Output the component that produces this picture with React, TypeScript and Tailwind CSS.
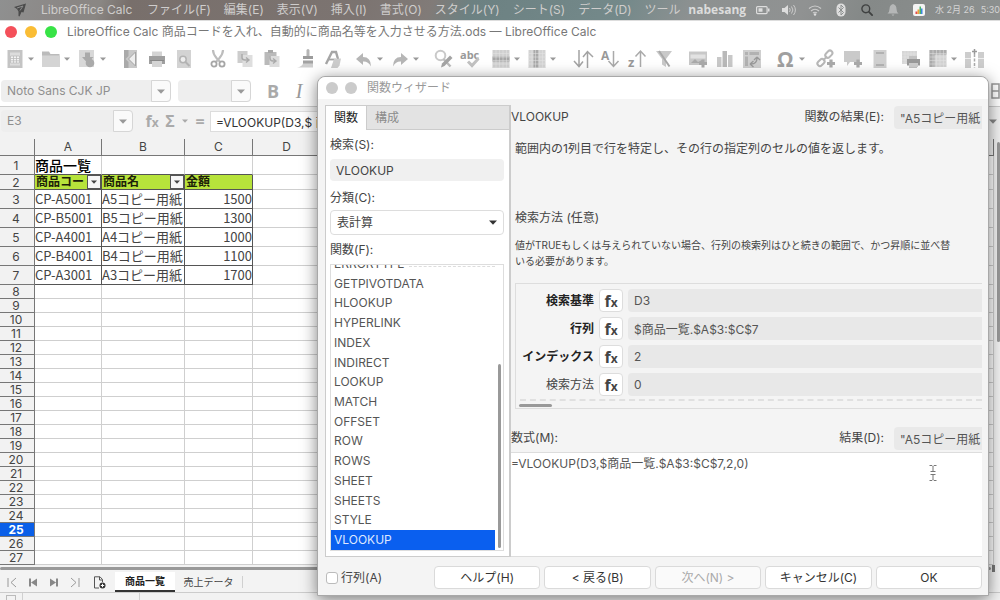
import React from "react";

const uiFont = "font-['Inter','Noto_Sans_CJK_JP',sans-serif]";
const cellFont = "font-['Noto_Sans_CJK_JP',sans-serif]";

function Caret({ className = "" }: { className?: string }) {
  return (
    <svg viewBox="0 0 8 5" className={className || "h-[5px] w-2 fill-[#999]"} aria-hidden="true">
      <path d="M0 .5h8L4 4.700z" />
    </svg>
  );
}

type Tool = { label: string; art: React.ReactNode; menu?: boolean };

const grid = (x: number, y: number, w: number, h: number, s = 3) => {
  let d = "";
  for (let i = x + s; i < x + w; i += s) d += `M${i} ${y}v${h}`;
  for (let j = y + s; j < y + h; j += s) d += `M${x} ${j}h${w}`;
  return <path d={d} stroke="#e4e4e4" strokeWidth=".5" fill="none" />;
};

const groups: { space: string; tools: Tool[] }[] = [
  {
    space: "",
    tools: [
      {
        label: "新規",
        menu: true,
        art: (
          <>
            <path d="M1.500 0H16.500V18H1.500z" fill="#c4c4c4" />
            <path d="M4 2.500h10v13H4z" fill="#dcdcdc" />
            <path d="M4.500 6h9v7h-9z" fill="#f4f4f4" stroke="#bbb" strokeWidth=".8" />
            <path d="M4.500 8.500h9M4.500 10.800h9M7.500 6v7M10.500 6v7" stroke="#bbb" strokeWidth=".8" />
          </>
        ),
      },
      {
        label: "開く",
        menu: true,
        art: (
          <>
            <path d="M0 1.500h7l1.500 2.500H17.500V6H0z" fill="#bbb" />
            <path d="M0 5.500h18V17H0z" fill="#d4d4d4" />
          </>
        ),
      },
      {
        label: "保存",
        menu: true,
        art: (
          <>
            <path d="M1 0h15v17H1z" fill="#d8d8d8" />
            <path d="M7 2.500h5V7h3.500L9.500 13 4 7h3z" fill="#aaa" />
            <circle cx="12" cy="13" r="4.300" fill="#aaa" />
          </>
        ),
      },
    ],
  },
  {
    space: "ml-[7px]",
    tools: [
      {
        label: "PDF",
        art: (
          <>
            <path d="M3 0h13v18H3z" fill="#c8c8c8" />
            <path d="M3 0h4.500v6L4.500 9l3 3v6H3z" fill="#aaa" />
            <path d="M14.500 2 7.500 9l7 7z" fill="#eee" stroke="#a4a4a4" />
          </>
        ),
      },
      {
        label: "印刷",
        art: (
          <>
            <path d="M4 1.500h10V7H4z" fill="#d4d4d4" />
            <path d="M1 6h16v8H1z" fill="#9f9f9f" />
            <path d="M4 11h10v6H4z" fill="#d4d4d4" />
            <path d="M2 10.500h14" stroke="#888" />
          </>
        ),
      },
      {
        label: "印刷プレビュー",
        art: (
          <>
            <path d="M2 0h14v18H2z" fill="#d3d3d3" />
            <circle cx="8" cy="9.500" r="3.200" fill="#eee" stroke="#b3b3b3" strokeWidth="1.500" />
            <path d="m10.500 12 4 4" stroke="#b3b3b3" strokeWidth="2" />
          </>
        ),
      },
    ],
  },
  {
    space: "ml-[7px]",
    tools: [
      {
        label: "切り取り",
        art: (
          <>
            <path d="M4 0c0 3 1 5 3.500 8l4.500 5M14 0c0 3-1 5-3.500 8L6 13" stroke="#bdbdbd" strokeWidth="2.200" fill="none" />
            <circle cx="5" cy="14" r="2.600" fill="#fff" stroke="#a6a6a6" strokeWidth="1.800" />
            <circle cx="13" cy="14" r="2.600" fill="#fff" stroke="#a6a6a6" strokeWidth="1.800" />
          </>
        ),
      },
      {
        label: "コピー",
        art: (
          <>
            <path d="M1.500 1h10v12h-10z" fill="#cdcdcd" />
            <path d="M6.500 5h10v12h-10z" fill="#dedede" />
            <path d="M6 4v3.500q0 2.500 3 2.500h3M10 7.500l3 2.500-3 2.500" stroke="#aaa" strokeWidth="1.400" fill="none" />
          </>
        ),
      },
      {
        label: "貼り付け",
        art: (
          <>
            <path d="M1.500 2h12v13h-12z" fill="#bababa" />
            <path d="M5 0h5v3H5z" fill="#a9a9a9" />
            <path d="M6.500 6h10v11h-10z" fill="#dcdcdc" />
            <path d="M7 6v2q0 3 3 3h2M10 8.500l3 2.500-3 2.500" stroke="#aaa" strokeWidth="1.400" fill="none" />
          </>
        ),
      },
    ],
  },
  {
    space: "ml-[7px]",
    tools: [
      {
        label: "書式のコピー",
        art: (
          <>
            <rect x="9.500" y="-1" width="3" height="9" rx="1.500" fill="#b5b5b5" />
            <path d="M6 6h10v3H6z" fill="#9c9c9c" />
            <path d="M6 10h10v7.500H0q5-1 6-4z" fill="#cfcfcf" />
            <path d="M6 11h10v2.500H6z" fill="#a2a2a2" />
          </>
        ),
      },
      {
        label: "書式のクリア",
        art: (
          <>
            <path d="M2 14 8 2h4l2 7" stroke="#a6a6a6" strokeWidth="2.400" fill="none" />
            <path d="M5 9.500h7" stroke="#a6a6a6" strokeWidth="1.800" />
            <path d="m10 9 7-.5-1.500 7-2 2.500H7z" fill="#ccc" />
          </>
        ),
      },
    ],
  },
  {
    space: "ml-1",
    tools: [
      {
        label: "元に戻す",
        menu: true,
        art: <path d="M1 9l7-6v4q8 0 8 9.500Q13 11 8 11.500V15z" fill="#b6b6b6" />,
      },
      {
        label: "やり直し",
        menu: true,
        art: <path d="M17 9l-7-6v4Q2 7 2 16.500 5 11 10 11.500V15z" fill="#b6b6b6" />,
      },
    ],
  },
  {
    space: "ml-[7px]",
    tools: [
      {
        label: "検索と置換",
        art: (
          <>
            <circle cx="6.500" cy="5.500" r="4.800" fill="#fff" stroke="#c9c9c9" strokeWidth="2" />
            <path d="m9.500 9 7 7.500" stroke="#bcbcbc" strokeWidth="2.500" />
            <path d="m7 17.500 1-4 8-8 2.500 2.500-8 8z" fill="#a4a4a4" />
          </>
        ),
      },
      {
        label: "スペルチェック",
        art: (
          <>
            <text x="-1" y="9" fontSize="11" fontWeight="700" fill="#999" className="font-['Open_Sans',sans-serif]">
              abc
            </text>
            <path d="m7 11.500 4 4 6.500-7" stroke="#c2c2c2" strokeWidth="3" fill="none" />
          </>
        ),
      },
    ],
  },
  {
    space: "ml-1",
    tools: [
      {
        label: "行",
        menu: true,
        art: (
          <>
            <path d="M.5 0h17v18H.5z" fill="#cfcfcf" />
            <path d="M.5 6.500h17v5H.5z" fill="#a6a6a6" />
            {grid(0.5, 0, 17, 18, 3.5)}
          </>
        ),
      },
      {
        label: "列",
        menu: true,
        art: (
          <>
            <path d="M.5 0h17v18H.5z" fill="#d3d3d3" />
            <path d="M5.500 0h5v18h-5z" fill="#aaa" />
            {grid(0.5, 0, 17, 18, 3.5)}
          </>
        ),
      },
    ],
  },
  {
    space: "ml-[10px]",
    tools: [
      {
        label: "並べ替え",
        art: (
          <path
            d="M5 0v16M0 11l5 5.500L9 11.500M13.500 18V2M9 7l4.500-5.500L19 7"
            stroke="#a3a3a3"
            strokeWidth="1.500"
            fill="none"
          />
        ),
      },
      {
        label: "昇順",
        art: (
          <>
            <text x="0" y="10" fontSize="12" fontWeight="700" fill="#999" className="font-['Open_Sans',sans-serif]">
              A
            </text>
            <path d="M12.500 1v15.500M7.500 11l5 5.500 5-5.500" stroke="#aaa" strokeWidth="1.500" fill="none" />
          </>
        ),
      },
      {
        label: "降順",
        art: (
          <>
            <text x="0" y="17" fontSize="13" fontWeight="700" fill="#999" className="font-['Open_Sans',sans-serif]">
              z
            </text>
            <path d="M12.500 17V1M7.500 6.500l5-5.500 5 5.500" stroke="#aaa" strokeWidth="1.500" fill="none" />
          </>
        ),
      },
      {
        label: "オートフィルター",
        art: (
          <>
            <path d="M1 1h16l-6 8v8l-4-2.500V9z" fill="#c9c9c9" />
            <path d="M4 1 14.500 16.500" stroke="#a8a8a8" strokeWidth="2" />
          </>
        ),
      },
    ],
  },
  {
    space: "ml-[7px]",
    tools: [
      {
        label: "画像",
        art: (
          <>
            <path d="M0 1.500h18V15H0z" fill="#c8c8c8" />
            <path d="M1.500 4.500h15v4h-15z" fill="#e2e2e2" />
            <path d="m2 13 4-4 3 3 4-2 3 3z" fill="#aaa" />
            <path d="M14 9.500v8M10 13.500h8" stroke="#aaa" strokeWidth="3" />
          </>
        ),
      },
      {
        label: "グラフ",
        art: (
          <>
            <path d="M1 7h4.500v10H1z" fill="#c8c8c8" />
            <path d="M6.500 1H11v16H6.500z" fill="#b9b9b9" />
            <path d="M12 5h4.500v12H12z" fill="#c8c8c8" />
          </>
        ),
      },
      {
        label: "ピボットテーブル",
        art: (
          <>
            <path d="M0 0h18v18H0z" fill="#cfcfcf" />
            <path d="M2 2h3v3H2zM6.500 2H16v3H6.500zM2 6.500h3V16H2z" fill="#b2b2b2" />
            <path d="M8 14q6 0 6-6M7 14l3.500-3M7 14l3.500 3M14 7l-3 3M14 7l3 3" stroke="#999" strokeWidth="1.300" fill="none" />
          </>
        ),
      },
    ],
  },
  {
    space: "ml-[7px]",
    tools: [
      {
        label: "特殊文字",
        menu: true,
        art: (
          <text x="0" y="16.500" fontSize="21" fontWeight="700" fill="#a0a0a0" className="font-['Open_Sans',sans-serif]">
            Ω
          </text>
        ),
      },
    ],
  },
  {
    space: "ml-1",
    tools: [
      {
        label: "ハイパーリンク",
        art: (
          <>
            <g fill="none" stroke="#b8b8b8" strokeWidth="2">
              <rect x="-3.500" y="-2.500" width="8" height="5" rx="2.500" transform="translate(11.500 4.500) rotate(-45)" />
              <rect x="-4" y="-2.500" width="8" height="5" rx="2.500" transform="translate(4 12.500) rotate(-45)" />
              <path d="m6 10.500 4-4" />
            </g>
            <path d="M14 9.500v8M10 13.500h8" stroke="#aaa" strokeWidth="3.200" />
          </>
        ),
      },
      {
        label: "コメント",
        art: (
          <>
            <path d="M0 1h16v11H6l-3 4v-4H0z" fill="#cacaca" />
            <path d="M14 9.500v8M10 13.500h8" stroke="#aaa" strokeWidth="3.200" />
          </>
        ),
      },
      {
        label: "ヘッダーとフッター",
        art: (
          <>
            <path d="M2.500 0h13v18h-13z" fill="#d0d0d0" />
            <path d="M5 3h8M5 15h8" stroke="#a8a8a8" strokeWidth="1.500" />
          </>
        ),
      },
    ],
  },
  {
    space: "ml-1",
    tools: [
      {
        label: "印刷範囲",
        art: (
          <>
            <path d="M0 1h15v13H0z" fill="#d6d6d6" />
            {grid(0, 1, 15, 13)}
            <path d="M7 6h8v4H7zM7 14h8v4H7z" fill="#c2c2c2" />
            <path d="M5 9h13v6.500H5z" fill="#999" />
            <path d="M7 13h9v4H7z" fill="#ccc" />
          </>
        ),
      },
      {
        label: "固定",
        menu: true,
        art: (
          <>
            <path d="M.5 0h17v17H.5z" fill="#d3d3d3" />
            <path d="M.5 0h17v4.500h-12V17h-5z" fill="#acacac" />
            {grid(0.5, 0, 17, 17, 3.5)}
          </>
        ),
      },
      {
        label: "分割",
        art: (
          <>
            <path d="M0 2h6v16H0zM13 2h6v16h-6z" fill="#cdcdcd" />
            <path d="M0 8.500h6M13 8.500h6" stroke="#eee" />
            <path d="M9.500 4v14" stroke="#aaa" strokeWidth="1.500" strokeDasharray="3 1.500" />
            <path d="M9.500-1v5M7 1.500h5" stroke="#999" strokeWidth="1.500" />
          </>
        ),
      },
    ],
  },
];

const menus = ["ファイル(F)", "編集(E)", "表示(V)", "挿入(I)", "書式(O)", "スタイル(Y)", "シート(S)", "データ(D)", "ツール"];

function MenuBar() {
  return (
    <header className="flex h-5 shrink-0 items-center overflow-hidden whitespace-nowrap bg-[linear-gradient(112deg,#8f9090_0%,#8b8785_7%,#8a8784_10%,#786f6b_13%,#7c7471_36%,#817b78_43%,#6c8182_47%,#74898a_62%,#8d9191_69%,#909292_80%,#858988_86%,#8c908f_100%)] text-xs text-[#cfcdcc]">
      <svg viewBox="0 0 14 14" className="ml-[13px] h-3.5 w-3.5 shrink-0" aria-hidden="true">
        <path d="M1 4 13 .5 10.500 9.500 8.500 9 6.500 13.500 5.500 13 5.500 8.500 4 6z" fill="#4b4b4b" />
        <path d="M4 5 10 3 7 7.500" fill="none" stroke="#8d8d8d" />
      </svg>
      <nav className="ml-3.5 flex gap-[13px]">
        <button className="w-[93px] text-left">LibreOffice Calc</button>
        {menus.map((m) => (
          <button key={m}>{m}</button>
        ))}
      </nav>
      <div className="ml-auto flex shrink-0 items-center">
        <span className="font-['Open_Sans',sans-serif] text-xs font-bold text-[#dcdcdc]">nabesang</span>
        <svg viewBox="0 0 14 10" className="ml-2.5 h-2.5 w-3.5" aria-label="バッテリー">
          <rect x=".6" y="1.600" width="10.500" height="7" rx="1" fill="none" stroke="#ddd" strokeWidth="1.200" />
          <path d="M2.500 3.300h4v3.500h-4zM12 3.500h1.500v3H12z" fill="#ddd" />
        </svg>
        <svg viewBox="0 0 14 12" className="ml-3 h-3 w-3.5" aria-label="音量">
          <path d="M0 4h2.500L6 1v10L2.500 8H0z" fill="#ddd" />
          <path d="M7.500 4q1.500 2 0 4M9.500 2.500q2.800 3.500 0 7M11.500 1q3.800 5 0 10" fill="none" stroke="#ccc" />
        </svg>
        <svg viewBox="0 0 14 12" className="ml-3 h-3 w-3.5" aria-label="Wi-Fi">
          <path d="M1 4.500q6-5 12 0M3 7q4-3.500 8 0M5 9q2-1.500 4 0" fill="none" stroke="#ccc" strokeWidth="1.200" />
          <circle cx="7" cy="10.500" r="1.200" fill="#ddd" />
        </svg>
        <svg viewBox="0 0 10 14" className="ml-3.5 h-3.5 w-2.5" aria-label="Bluetooth">
          <rect x=".5" y=".5" width="9" height="13" rx="4.500" fill="#dedede" />
          <path d="m2.500 4.500 5 5L5 12V2l2.500 2.500-5 5" fill="none" stroke="#8c908f" />
        </svg>
        <svg viewBox="0 0 12 12" className="ml-[15px] h-3 w-3" aria-label="検索">
          <circle cx="4.800" cy="4.800" r="3.900" fill="none" stroke="#3f4141" strokeWidth="1.400" />
          <path d="m7.700 7.700 4 4" stroke="#3f4141" strokeWidth="1.800" />
        </svg>
        <svg viewBox="0 0 12 12" className="ml-3.5 h-3 w-3" aria-label="通知">
          <path d="M6 0q3.500 1 3.500 5 0 3 2 4.500H.5q2-1.500 2-4.500Q2.500 1 6 0M4.500 10.500h3L6 12z" fill="#b5b7b7" />
        </svg>
        <svg viewBox="0 0 12 12" className="ml-3.5 h-3 w-3" aria-label="グラフ">
          <rect width="12" height="12" rx="2" fill="#f4f4f4" />
          <path d="M2.500 7.500h2V10h-2z" fill="#e34b4b" />
          <path d="M4.500 5.500h2V10h-2z" fill="#f0a13c" />
          <path d="M6.500 2.500H8V10H6.500z" fill="#46b26b" />
          <path d="M8 4.500h1.500V10H8z" fill="#3d86e0" />
        </svg>
        <span className="ml-2.5 text-[9px] text-[#d4d4d4]">水 2月 26</span>
        <span className="ml-1.5 text-[9px] text-[#d4d4d4]">5:30</span>
      </div>
    </header>
  );
}

function Toolbar() {
  return (
    <div className="flex h-[34px] shrink-0 items-center overflow-hidden pl-px" role="toolbar" aria-label="標準">
      {groups.map((g, i) => (
        <div key={i} className={`flex shrink-0 items-center ${g.space}`}>
          {g.tools.map((t) => (
            <div key={t.label} className="flex items-center">
              <button aria-label={t.label} className="flex w-[27px] justify-center">
                <svg viewBox="0 0 18 18" className="h-[18px] w-[18px] overflow-visible">
                  {t.art}
                </svg>
              </button>
              {t.menu && (
                <button aria-label={`${t.label}のメニュー`} className="w-[9px]">
                  <Caret className="h-1 w-1.5 fill-[#999]" />
                </button>
              )}
            </div>
          ))}
        </div>
      ))}
    </div>
  );
}

function Combo({ label, value, width }: { label: string; value: string; width: string }) {
  return (
    <div className={`flex h-[22px] items-stretch rounded bg-[#eee] ${width}`}>
      <input aria-label={label} defaultValue={value} className="min-w-0 flex-1 bg-transparent pl-1.5 text-xs text-[#8f8f8f] outline-none" />
      <button aria-label={`${label}の一覧`} className="flex w-5 items-center justify-center rounded-r border border-[#d6d6d6] bg-[#fafafa]">
        <Caret />
      </button>
    </div>
  );
}

const rows: { h: string; cells: string[] }[] = [
  { h: "h-[19px]", cells: ["商品一覧", "", ""] },
  { h: "h-[15px]", cells: ["商品コー", "商品名", "金額"] },
  { h: "h-[19px]", cells: ["CP-A5001", "A5コピー用紙", "1500"] },
  { h: "h-[19px]", cells: ["CP-B5001", "B5コピー用紙", "1300"] },
  { h: "h-[19px]", cells: ["CP-A4001", "A4コピー用紙", "1000"] },
  { h: "h-[19px]", cells: ["CP-B4001", "B4コピー用紙", "1100"] },
  { h: "h-[19px]", cells: ["CP-A3001", "A3コピー用紙", "1700"] },
];
for (let i = 8; i <= 27; i++) rows.push({ h: "h-[14px]", cells: ["", "", ""] });

// Columns to the right of D stay empty; the header letter is drawn for D only.
const extraCols = ["D", "", "", "", "", "", "", "", "", "", ""];

function Sheet() {
  return (
    <div className="flex shrink-0 justify-between bg-[#f2f2f2] pt-1">
      <div className="min-w-0 flex-1 overflow-hidden">
        <table className="w-full table-fixed border-separate border-spacing-0 bg-white">
          <colgroup>
            <col className="w-[35px]" />
            <col className="w-[67px]" />
            <col className="w-[83px]" />
            <col className="w-[68px]" />
            {extraCols.map((_, k) => (
              <col key={k} className={k === 10 ? "" : "w-[68px]"} />
            ))}
          </colgroup>
          <thead>
            <tr className="h-[17px] text-xs leading-4 text-[#444]">
              <th className="border-b border-r border-[#777] bg-[#f2f2f2] p-0" />
              {["A", "B", "C", ...extraCols].map((c, k) => (
                <th key={k} className="overflow-hidden border-b border-r border-[#777] bg-[#f2f2f2] p-0 font-normal">
                  {c}
                </th>
              ))}
            </tr>
          </thead>
          <tbody>
            {rows.map((r, i) => {
              const n = i + 1;
              const head = n === 2;
              const data = n > 2 && n < 8;
              return (
                <tr key={n} className={r.h}>
                  <th
                    className={`border-b border-r border-[#777] p-0 pr-[2px] text-xs leading-[13px] ${
                      n === 25 ? "bg-[#0a5fe8] font-bold text-white" : "bg-[#f2f2f2] font-normal text-[#444]"
                    }`}
                  >
                    {n}
                  </th>
                  {r.cells.map((c, j) => (
                    <td
                      key={j}
                      className={`whitespace-nowrap border-b border-r p-0 ${cellFont} ${
                        head
                          ? "border-[#555] bg-[#b7e33b] align-top text-xs leading-3 font-bold text-[#1c2108]"
                          : data
                            ? "border-[#555] text-[13px] leading-[18px] text-[#444]"
                            : n === 1
                              ? "border-b-[#555] border-r-[#d0d0d0] text-sm leading-[18px] font-medium text-black"
                              : "border-[#cfcfcf]"
                      } ${data && j === 2 ? "text-right" : ""}`}
                    >
                      {head ? (
                        <div className="flex h-3.5 items-stretch">
                          <span className="min-w-0 flex-1 pl-px">{c}</span>
                          {j < 2 && (
                            <button aria-label={`${c}のフィルター`} className="flex w-3.5 items-center justify-center border border-[#555] bg-[#f6f6f6]">
                              <Caret className="h-1 w-1.5 fill-[#444]" />
                            </button>
                          )}
                        </div>
                      ) : (
                        c
                      )}
                    </td>
                  ))}
                  {extraCols.map((_, k) => (
                    <td key={k} className="border-b border-r border-[#cfcfcf] p-0" />
                  ))}
                </tr>
              );
            })}
          </tbody>
        </table>
      </div>
      <div className="w-1.5 pt-[3px]">
        <div className="ml-auto h-[200px] w-[3px] rounded bg-[#999]" />
      </div>
    </div>
  );
}

function SheetTabs() {
  return (
    <div className="flex h-5 shrink-0 items-center bg-[#f3f3f3] text-[11px] text-[#444]">
      <div className="flex items-center gap-[9px] pl-1.5">
        {["M2 2v9M10 2 5 6.500l5 4.500", "B", "F", "M10 2v9M2 2l5 4.500L2 11"].map((d, i) => (
          <button key={i} aria-label={["先頭", "前", "次", "末尾"][i]}>
            <svg viewBox="0 0 12 13" className="h-[13px] w-3">
              {d === "B" && <path d="M2 2.500h2v8H2zM10 2.500v8L4 6.500z" fill="#888" />}
              {d === "F" && <path d="M8 2.500h2v8H8zM2 2.500v8l6-4z" fill="#888" />}
              {d.length > 1 && <path d={d} stroke="#999" fill="none" />}
            </svg>
          </button>
        ))}
      </div>
      <button aria-label="シートの追加" className="ml-3">
        <svg viewBox="0 0 13 13" className="h-[13px] w-[13px]">
          <path d="M6 12H1.500V.8H7L9.500 3.500V6M6.500 1v3h3" fill="none" stroke="#555" />
          <circle cx="9.500" cy="9.500" r="3" fill="#333" />
          <path d="M9.500 7.800v3.400M7.800 9.500h3.400" stroke="#fff" />
        </svg>
      </button>
      <button className="ml-[9px] h-5 w-[60px] border-b-2 border-[#333] bg-white text-[10px] font-bold text-[#222]">商品一覧</button>
      <button className="h-3 w-[68px] border-r border-[#d0d0d0] text-[10px] leading-3">売上データ</button>
    </div>
  );
}

const functions = [
  "ERRORTYPE", "GETPIVOTDATA", "HLOOKUP", "HYPERLINK", "INDEX", "INDIRECT", "LOOKUP", "MATCH",
  "OFFSET", "ROW", "ROWS", "SHEET", "SHEETS", "STYLE", "VLOOKUP",
];

const args = [
  { label: "検索基準", value: "D3", bold: true },
  { label: "行列", value: "$商品一覧.$A$3:$C$7", bold: true },
  { label: "インデックス", value: "2", bold: true },
  { label: "検索方法", value: "0", bold: false },
];

function FunctionPane() {
  return (
    <section className="flex w-[186px] shrink-0 flex-col border-r-2 border-b border-l border-[#ccc] bg-white">
      <div className="flex h-[25px] shrink-0 border-t border-[#ccc]" role="tablist">
        <button role="tab" aria-selected="true" className="w-[41px] border-r border-[#ccc] text-[#222]">
          関数
        </button>
        <button role="tab" aria-selected="false" className="flex-1 border-b border-[#ccc] bg-[#e3e3e3] pl-2 text-left text-[#8c8c8c]">
          構成
        </button>
      </div>
      <div className="flex min-h-0 flex-1 flex-col pr-[5px] pb-[5px] pl-1">
        <label htmlFor="fn-search" className="flex h-[29px] items-center">
          検索(S):
        </label>
        <input id="fn-search" defaultValue="VLOOKUP" className="h-[22px] rounded bg-[#f0f0f0] pl-1.5 outline-none" />
        <label htmlFor="fn-category" className="flex h-[29px] items-center pt-1">
          分類(C):
        </label>
        <div className="relative">
          <select id="fn-category" className="h-[25px] w-full appearance-none rounded border border-[#ddd] bg-white pl-1.5 outline-none">
            <option>表計算</option>
          </select>
          <Caret className="pointer-events-none absolute top-2.5 right-[7px] h-[5px] w-2 fill-[#333]" />
        </div>
        <span id="fn-list" className="flex h-[29px] items-center">
          関数(F):
        </span>
        <div className="relative flex min-h-0 flex-1 flex-col justify-end overflow-hidden border border-[#ddd]">
          <div role="listbox" aria-labelledby="fn-list" className="mr-2 flex h-[296px] shrink-0 flex-col">
            {functions.map((f) => (
              <button
                key={f}
                role="option"
                aria-selected={f === "VLOOKUP"}
                className={`min-h-0 flex-1 pl-[3px] text-left ${f === "VLOOKUP" ? "bg-[#0a5fef] text-[#dfe8ff]" : "text-[#555]"}`}
              >
                {f}
              </button>
            ))}
          </div>
          <div className="absolute top-px right-2 w-[86px] border-t border-dashed border-[#ddd]" />
          <div className="absolute right-0.5 bottom-0.5 h-[184px] w-[3px] rounded bg-[#999]" />
        </div>
      </div>
    </section>
  );
}

function Result({ label, id }: { label: string; id: string }) {
  return (
    <div className="flex items-center">
      <label htmlFor={id} className="pr-2.5">
        {label}
      </label>
      <input
        id={id}
        readOnly
        defaultValue={'"A5コピー用紙'}
        className="h-[23px] w-[88px] rounded-l bg-[#e9e9e9] pl-1.5 text-[#555] outline-none"
      />
    </div>
  );
}

function ArgumentPane() {
  return (
    <section className="flex min-w-0 flex-1 flex-col overflow-hidden border-b border-[#ddd]">
      <div className="flex h-6 items-center justify-between">
        <h2>VLOOKUP</h2>
        <Result id="fn-result" label="関数の結果(E):" />
      </div>
      <p className="mt-2.5 ml-1 whitespace-nowrap leading-5">範囲内の1列目で行を特定し、その行の指定列のセルの値を返します。</p>
      <h3 className="mt-[49px] ml-1 leading-5">検索方法 (任意)</h3>
      <p className="mt-[9px] ml-1 text-[10px] leading-4 whitespace-nowrap">
        値がTRUEもしくは与えられていない場合、行列の検索列はひと続きの範囲で、かつ昇順に並べ替
        <br />
        いる必要があります。
      </p>
      <div className="mt-3.5 ml-1 flex h-[126px] shrink-0 flex-col border-y border-l border-[#ddd] pt-[5px]">
        <div className="flex flex-col gap-[5px]">
          {args.map((a, i) => (
            <div key={a.label} className="flex h-[23px] items-center">
              <label htmlFor={`arg-${i}`} className={`w-[78px] text-right ${a.bold ? "font-bold text-[#222]" : ""}`}>
                {a.label}
              </label>
              <button
                aria-label={`${a.label}の関数`}
                className="ml-[5px] h-[23px] w-6 rounded border border-[#ddd] bg-white font-['Open_Sans',sans-serif] text-base leading-5 font-bold text-[#444]"
              >
                f<span className="text-xs">x</span>
              </button>
              <input
                id={`arg-${i}`}
                defaultValue={a.value}
                className="ml-[5px] h-[23px] min-w-0 flex-1 rounded-l bg-[#e8e8e8] pl-1.5 text-[#555] outline-none"
              />
            </div>
          ))}
        </div>
        <div className="mt-[3px] ml-1 border-t-2 border-dashed border-[#e0e0e0]" />
        <div className="mt-[3px] ml-[3px] h-[3px] w-[33px] rounded bg-[#999]" />
      </div>
      <div className="mt-[15px] flex h-7 items-center justify-between">
        <label htmlFor="formula">数式(M):</label>
        <Result id="formula-result" label="結果(D):" />
      </div>
      <div className="relative flex min-h-0 flex-1 border-t border-[#ddd]">
        <textarea
          id="formula"
          defaultValue="=VLOOKUP(D3,$商品一覧.$A$3:$C$7,2,0)"
          className="w-full resize-none overflow-hidden bg-white pt-0.5 leading-[18px] text-[#555] outline-none"
        />
        <svg viewBox="0 0 8 16" className="absolute top-3 right-[45px] h-4 w-2" aria-hidden="true">
          <path d="M.5.5h2.500L4 1.500 5 .5h2.500M4 1.500v5M1.500 6.500h5M1.500 9.500h5M4 9.500v5M.5 15.500h2.500l1-1 1 1h2.500" fill="none" stroke="#777" />
        </svg>
      </div>
    </section>
  );
}

function Wizard() {
  const buttons = ["ヘルプ(H)", "< 戻る(B)", "次へ(N) >", "キャンセル(C)", "OK"];
  return (
    <div
      role="dialog"
      aria-label="関数ウィザード"
      className="absolute top-[76px] right-[11px] bottom-1 left-[317px] flex flex-col rounded-t-lg border border-[#a8a8a8] bg-[#f4f4f4] text-xs text-[#444] shadow-[0_3px_16px_rgba(0,0,0,0.5)]"
    >
      <div className="flex h-[22px] shrink-0 items-center rounded-t-lg bg-white pl-2 text-[#999]">
        <button aria-label="閉じる" className="h-3 w-3 rounded-full bg-[#cbcbcb]" />
        <button aria-label="最小化" className="ml-[7px] h-3 w-3 rounded-full bg-[#cbcbcb]" />
        <h1 className="ml-2.5">関数ウィザード</h1>
      </div>
      <div className="flex min-h-0 flex-1 pt-1.5 pr-1.5 pl-[7px]">
        <FunctionPane />
        <ArgumentPane />
      </div>
      <footer className="flex h-[38px] shrink-0 items-center pt-[3px] pr-1.5 pl-2">
        <input
          id="array"
          type="checkbox"
          className="h-3 w-3 appearance-none rounded-[3px] border border-[#bbb] bg-white"
        />
        <label htmlFor="array" className="w-[96px] pl-[3px]">
          行列(A)
        </label>
        <div className="flex flex-1 gap-1">
          {buttons.map((b) => (
            <button
              key={b}
              disabled={b.startsWith("次へ")}
              className="h-[23px] flex-1 rounded border border-[#dadada] bg-white text-[#333] disabled:bg-[#fafafa] disabled:text-[#aaa]"
            >
              {b}
            </button>
          ))}
        </div>
      </footer>
    </div>
  );
}

export default function App() {
  return (
    <main className={`relative flex h-screen w-full flex-col overflow-hidden bg-white ${uiFont}`}>
      <MenuBar />
      <div className="flex h-[22px] shrink-0 items-center border-t border-[#ddd] pl-[5px] text-xs text-[#777]">
        <button aria-label="閉じる" className="h-3 w-3 rounded-full bg-[#f4505a]" />
        <button aria-label="最小化" className="ml-2 h-3 w-3 rounded-full bg-[#fabd35]" />
        <button aria-label="最大化" className="ml-2 h-3 w-3 rounded-full bg-[#37e346]" />
        <h1 className="ml-2.5 whitespace-nowrap">
          LibreOffice Calc 商品コードを入れ、自動的に商品名等を入力させる方法.ods — LibreOffice Calc
        </h1>
      </div>
      <Toolbar />
      <div className="flex h-[31px] shrink-0 items-center border-b border-[#ccc] pl-px">
        <Combo label="フォント名" value="Noto Sans CJK JP" width="w-[170px]" />
        <div className="w-[7px]" />
        <Combo label="フォントサイズ" value="" width="w-[73px]" />
        <button aria-label="太字" className="ml-[15px] w-3.5 font-['Open_Sans',sans-serif] text-lg font-bold text-[#aaa]">
          B
        </button>
        <button aria-label="斜体" className="ml-3 w-3.5 font-['Liberation_Serif',serif] text-xl text-[#999] italic">
          I
        </button>
        <svg viewBox="0 0 9 16" className="ml-auto h-4 w-[9px]" aria-hidden="true">
          <path d="M1 1h7v14H1zM1 8h7" fill="none" stroke="#999" strokeWidth="1.500" />
        </svg>
      </div>
      <div className="flex h-7 shrink-0 items-center bg-[#f2f2f2] pl-px">
        <Combo label="名前ボックス" value="E3" width="w-[132px]" />
        <button aria-label="関数ウィザード" className="ml-[11px] w-4 font-['Open_Sans',sans-serif] text-base font-bold text-[#aaa]">
          f<span className="text-xs">x</span>
        </button>
        <button aria-label="合計" className="ml-1 w-3 font-['Open_Sans',sans-serif] text-base font-bold text-[#aaa]">
          Σ
        </button>
        <Caret className="ml-1.5 h-1 w-1.5 fill-[#aaa]" />
        <button aria-label="数式" className="ml-1.5 w-3 font-['Open_Sans',sans-serif] text-base font-bold text-[#aaa]">
          =
        </button>
        <input
          aria-label="数式の入力"
          defaultValue="=VLOOKUP(D3,$ 商品一覧.$A$3:$C$7,2,0)"
          className="ml-1 h-[21px] min-w-0 flex-1 border border-[#ddd] bg-white pl-[5px] text-xs text-[#333] outline-none"
        />
        <Caret className="mx-[3px] h-[5px] w-2 fill-[#888]" />
      </div>
      <Sheet />
      <div className="flex h-[7px] shrink-0 items-center bg-[#f3f3f3]">
        <div className="h-[3px] flex-1 rounded bg-[#999]" />
        <div className="mr-[5px] ml-px h-[7px] w-[3px] bg-[#777]" />
      </div>
      <SheetTabs />
      <div className="flex flex-1 items-start border-t border-[#ccc] bg-[#f2f2f2] pl-1.5">
        <div className="mt-0.5 h-2.5 w-2.5 border border-[#bbb]" />
        <div className="ml-1.5 h-3 w-[118px] border-x border-[#d0d0d0]" />
      </div>
      <Wizard />
    </main>
  );
}
